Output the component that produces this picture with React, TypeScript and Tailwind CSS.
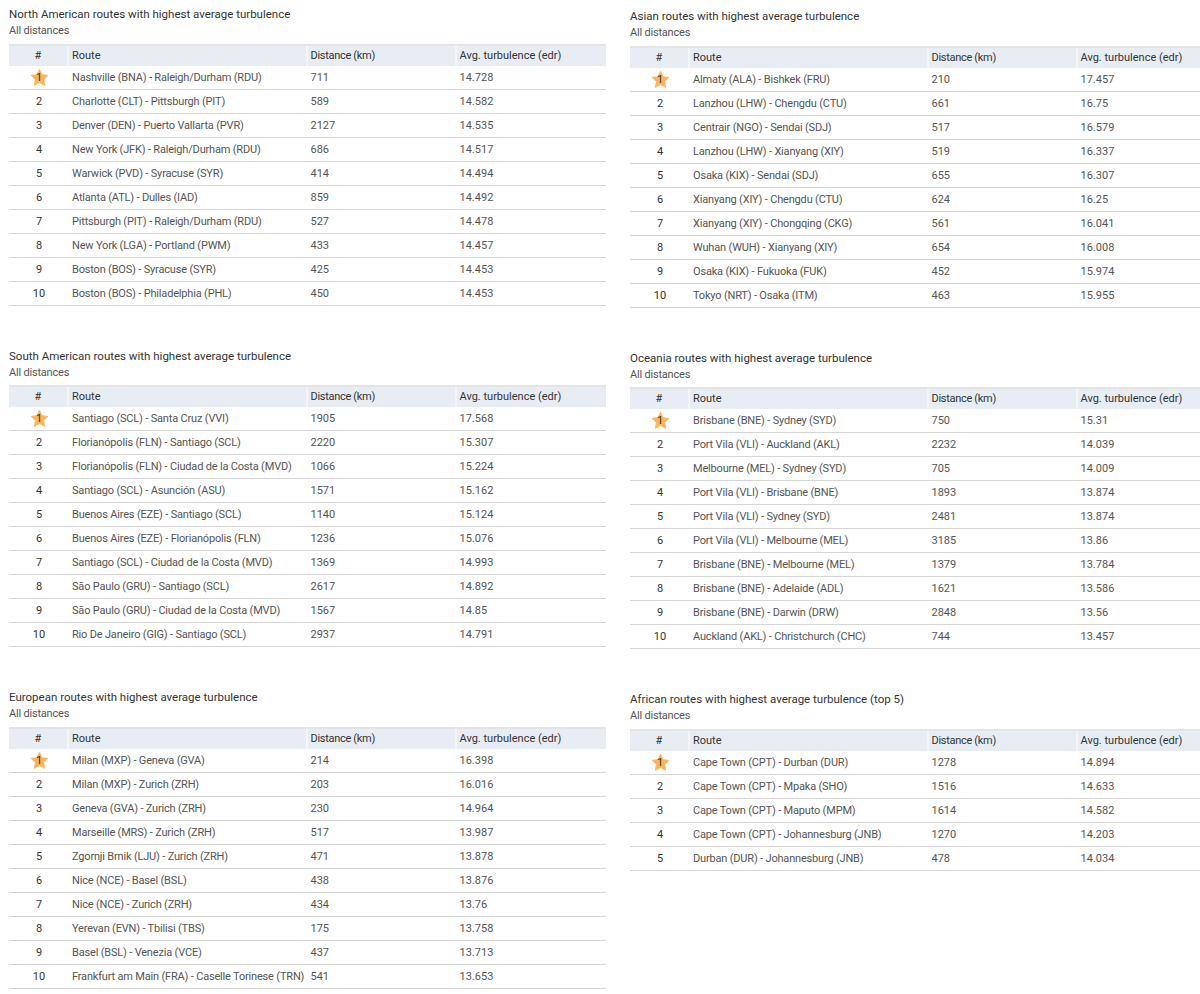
type Row = [string, string, string];

const northAmerica: Row[] = [
  ["Nashville (BNA) - Raleigh/Durham (RDU)", "711", "14.728"],
  ["Charlotte (CLT) - Pittsburgh (PIT)", "589", "14.582"],
  ["Denver (DEN) - Puerto Vallarta (PVR)", "2127", "14.535"],
  ["New York (JFK) - Raleigh/Durham (RDU)", "686", "14.517"],
  ["Warwick (PVD) - Syracuse (SYR)", "414", "14.494"],
  ["Atlanta (ATL) - Dulles (IAD)", "859", "14.492"],
  ["Pittsburgh (PIT) - Raleigh/Durham (RDU)", "527", "14.478"],
  ["New York (LGA) - Portland (PWM)", "433", "14.457"],
  ["Boston (BOS) - Syracuse (SYR)", "425", "14.453"],
  ["Boston (BOS) - Philadelphia (PHL)", "450", "14.453"],
];

const southAmerica: Row[] = [
  ["Santiago (SCL) - Santa Cruz (VVI)", "1905", "17.568"],
  ["Florianópolis (FLN) - Santiago (SCL)", "2220", "15.307"],
  ["Florianópolis (FLN) - Ciudad de la Costa (MVD)", "1066", "15.224"],
  ["Santiago (SCL) - Asunción (ASU)", "1571", "15.162"],
  ["Buenos Aires (EZE) - Santiago (SCL)", "1140", "15.124"],
  ["Buenos Aires (EZE) - Florianópolis (FLN)", "1236", "15.076"],
  ["Santiago (SCL) - Ciudad de la Costa (MVD)", "1369", "14.993"],
  ["São Paulo (GRU) - Santiago (SCL)", "2617", "14.892"],
  ["São Paulo (GRU) - Ciudad de la Costa (MVD)", "1567", "14.85"],
  ["Rio De Janeiro (GIG) - Santiago (SCL)", "2937", "14.791"],
];

const europe: Row[] = [
  ["Milan (MXP) - Geneva (GVA)", "214", "16.398"],
  ["Milan (MXP) - Zurich (ZRH)", "203", "16.016"],
  ["Geneva (GVA) - Zurich (ZRH)", "230", "14.964"],
  ["Marseille (MRS) - Zurich (ZRH)", "517", "13.987"],
  ["Zgornji Brnik (LJU) - Zurich (ZRH)", "471", "13.878"],
  ["Nice (NCE) - Basel (BSL)", "438", "13.876"],
  ["Nice (NCE) - Zurich (ZRH)", "434", "13.76"],
  ["Yerevan (EVN) - Tbilisi (TBS)", "175", "13.758"],
  ["Basel (BSL) - Venezia (VCE)", "437", "13.713"],
  ["Frankfurt am Main (FRA) - Caselle Torinese (TRN)", "541", "13.653"],
];

const asia: Row[] = [
  ["Almaty (ALA) - Bishkek (FRU)", "210", "17.457"],
  ["Lanzhou (LHW) - Chengdu (CTU)", "661", "16.75"],
  ["Centrair (NGO) - Sendai (SDJ)", "517", "16.579"],
  ["Lanzhou (LHW) - Xianyang (XIY)", "519", "16.337"],
  ["Osaka (KIX) - Sendai (SDJ)", "655", "16.307"],
  ["Xianyang (XIY) - Chengdu (CTU)", "624", "16.25"],
  ["Xianyang (XIY) - Chongqing (CKG)", "561", "16.041"],
  ["Wuhan (WUH) - Xianyang (XIY)", "654", "16.008"],
  ["Osaka (KIX) - Fukuoka (FUK)", "452", "15.974"],
  ["Tokyo (NRT) - Osaka (ITM)", "463", "15.955"],
];

const oceania: Row[] = [
  ["Brisbane (BNE) - Sydney (SYD)", "750", "15.31"],
  ["Port Vila (VLI) - Auckland (AKL)", "2232", "14.039"],
  ["Melbourne (MEL) - Sydney (SYD)", "705", "14.009"],
  ["Port Vila (VLI) - Brisbane (BNE)", "1893", "13.874"],
  ["Port Vila (VLI) - Sydney (SYD)", "2481", "13.874"],
  ["Port Vila (VLI) - Melbourne (MEL)", "3185", "13.86"],
  ["Brisbane (BNE) - Melbourne (MEL)", "1379", "13.784"],
  ["Brisbane (BNE) - Adelaide (ADL)", "1621", "13.586"],
  ["Brisbane (BNE) - Darwin (DRW)", "2848", "13.56"],
  ["Auckland (AKL) - Christchurch (CHC)", "744", "13.457"],
];

const africa: Row[] = [
  ["Cape Town (CPT) - Durban (DUR)", "1278", "14.894"],
  ["Cape Town (CPT) - Mpaka (SHO)", "1516", "14.633"],
  ["Cape Town (CPT) - Maputo (MPM)", "1614", "14.582"],
  ["Cape Town (CPT) - Johannesburg (JNB)", "1270", "14.203"],
  ["Durban (DUR) - Johannesburg (JNB)", "478", "14.034"],
];

function RouteTable({ title, rows }: { title: string; rows: Row[] }) {
  return (
    <div className="w-[597px] shrink-0">
      <div className="text-[11.5px] leading-[16px] text-[#333]">{title}</div>
      <div className="mt-[1px] text-[11px] leading-[15px] tracking-[-0.2px] text-[#555]">All distances</div>
      {/* header */}
      <div className="mt-[5.5px] grid grid-cols-[60px_238.5px_149px_149.5px] h-[22px] bg-[#e8edf4] border-t-2 border-[#e4e4e4] text-[11px] leading-[19px] text-[#333]">
        <div className="text-center border-r-2 border-[#f4f5f7]">#</div>
        <div className="pl-[3px] border-r-2 border-[#f4f5f7]">Route</div>
        <div className="pl-[3px] tracking-[-0.3px] border-r-2 border-[#f4f5f7]">Distance (km)</div>
        <div className="pl-[3px]">Avg. turbulence (edr)</div>
      </div>
      {rows.map((row, i) => (
        <div key={row[0]} className="grid grid-cols-[60px_238.5px_149px_149.5px] h-[24px] border-b border-[#d4d4d4] text-[11px] leading-[24px] text-[#555]">
          <div className="relative text-center text-[#333]">
            {i === 0 && (
              <svg viewBox="0 0 24 24" className="absolute left-[21px] top-[2px] w-[19px] h-[19px]">
                <path d="M12 1.5l3.2 6.9 7.5.9-5.5 5.2 1.4 7.5-6.6-3.7-6.6 3.7 1.4-7.5L1.3 9.3l7.5-.9z" fill="#fbb45c" stroke="#fbb45c" strokeWidth="1" strokeLinejoin="round" />
              </svg>
            )}
            <span className="relative">{i + 1}</span>
          </div>
          <div className="pl-[3px] whitespace-nowrap tracking-[-0.18px]">{row[0]}</div>
          <div className="pl-[3px]">{row[1]}</div>
          <div className="pl-[3px]">{row[2]}</div>
        </div>
      ))}
    </div>
  );
}

export default function App() {
  return (
    <div className="h-[994px] w-[1200px] overflow-hidden bg-white font-['Roboto','Open_Sans',sans-serif]">
      <div className="flex gap-[24px] pl-[9px]">
        <div className="flex flex-col gap-[42px] pt-[6px]">
          <RouteTable title="North American routes with highest average turbulence" rows={northAmerica} />
          <RouteTable title="South American routes with highest average turbulence" rows={southAmerica} />
          <RouteTable title="European routes with highest average turbulence" rows={europe} />
        </div>
        <div className="flex flex-col gap-[42px] pt-[8px]">
          <RouteTable title="Asian routes with highest average turbulence" rows={asia} />
          <RouteTable title="Oceania routes with highest average turbulence" rows={oceania} />
          <RouteTable title="African routes with highest average turbulence (top 5)" rows={africa} />
        </div>
      </div>
    </div>
  );
}
